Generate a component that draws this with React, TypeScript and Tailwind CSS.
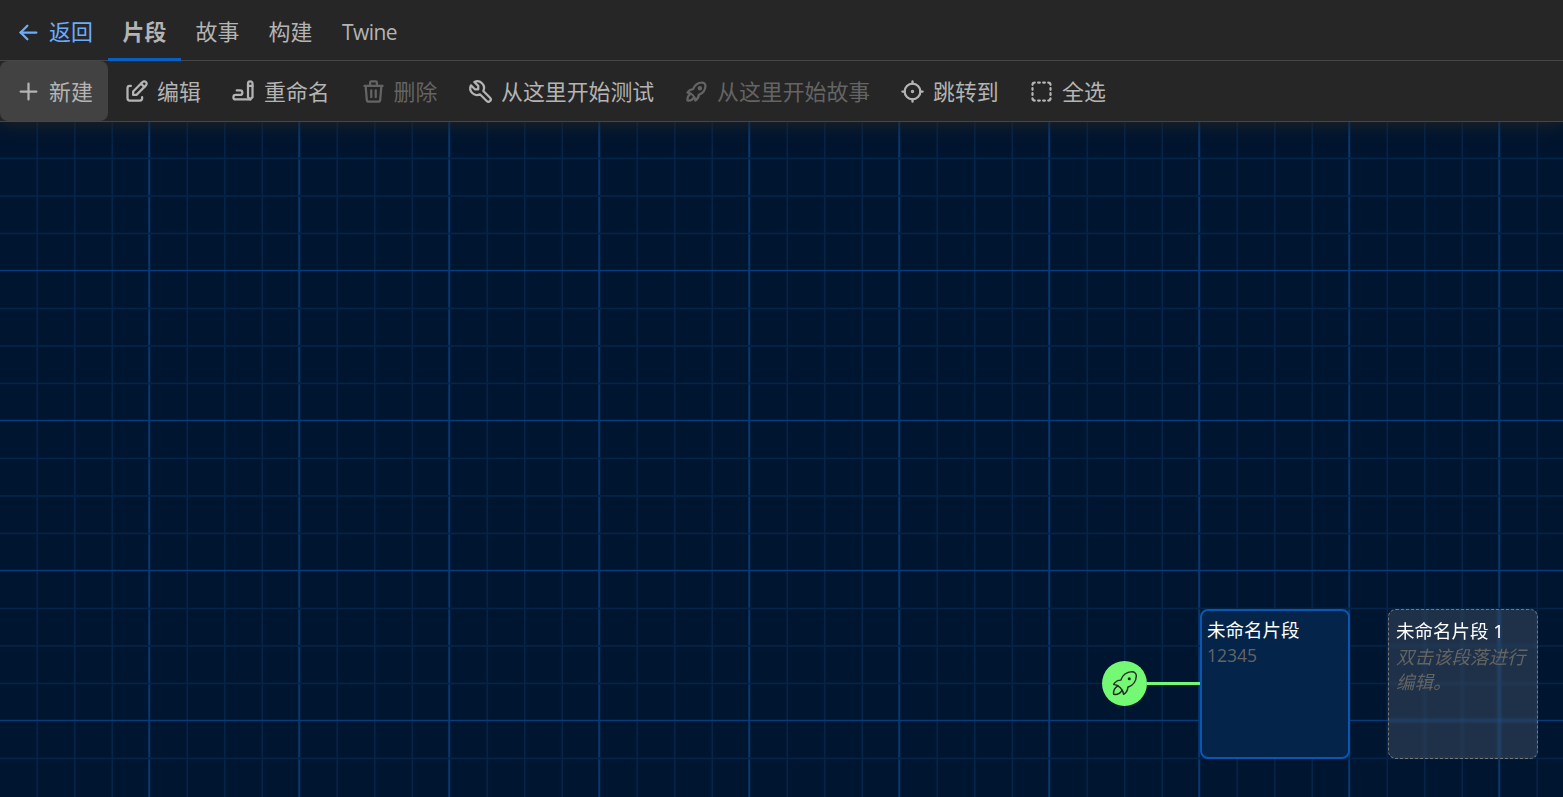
import type { ReactNode } from "react";
import { TbArrowLeft, TbEdit, TbFocus2, TbMarquee, TbPlus, TbRocket, TbTool, TbTrash, TbWriting } from "react-icons/tb";

type Action = { label: string; icon: ReactNode; width: string; disabled?: boolean; active?: boolean };

const iconClass = "size-[27px] shrink-0 [stroke-width:2]";

const actions: Action[] = [
  { label: "新建", icon: <TbPlus className={iconClass} />, width: "w-[108px]", active: true },
  { label: "编辑", icon: <TbEdit className={iconClass} />, width: "w-[107px]" },
  { label: "重命名", icon: <TbWriting className={iconClass} />, width: "w-[129.5px]" },
  { label: "删除", icon: <TbTrash className={iconClass} />, width: "w-[107.5px]", disabled: true },
  { label: "从这里开始测试", icon: <TbTool className={iconClass} />, width: "w-[216px]" },
  { label: "从这里开始故事", icon: <TbRocket className={iconClass} />, width: "w-[216px]", disabled: true },
  { label: "跳转到", icon: <TbFocus2 className={iconClass} />, width: "w-[129px]" },
  { label: "全选", icon: <TbMarquee className={iconClass} />, width: "w-[108px]" },
];

function StartRocket() {
  return (
    <svg viewBox="0 0 24 24" className="size-[34px] shrink-0" fill="none" stroke="currentColor" strokeWidth="1" strokeLinecap="round" strokeLinejoin="round">
      <path d="M4 13a8 8 0 0 1 7 7a6 6 0 0 0 3 -5a9 9 0 0 0 6 -8a3 3 0 0 0 -3 -3a9 9 0 0 0 -8 6a6 6 0 0 0 -5 3" />
      <path d="M7 14a6 6 0 0 0 -3 6a6 6 0 0 0 6 -3" />
      <circle cx="15" cy="9" r="0.6" fill="currentColor" />
    </svg>
  );
}

function Grid() {
  return (
    <svg className="absolute inset-0 size-full" aria-hidden="true">
      {Array.from({ length: 41 }, (_, i) => i + 1).map((i) => (
        <rect key={"v" + i} x={i * 37.5 - (i % 4 === 0 ? 1.75 : 1.1)} y={0} width={i % 4 === 0 ? 2 : 1.75} height={675} fill={i % 4 === 0 ? "#073973" : "#042448"} />
      ))}
      {Array.from({ length: 18 }, (_, i) => (
        <rect key={"h" + i} x={0} y={i * 37.5 - (i % 4 === 0 ? 2.25 : 1.9)} width={1563} height={i % 4 === 0 ? 1.5 : 1.75} fill={i % 4 === 0 ? "#073b7c" : "#042448"} />
      ))}
    </svg>
  );
}

export default function App() {
  return (
    <div className="flex h-[797px] w-[1563px] flex-col overflow-hidden bg-[#00152f] font-['Noto_Sans','Noto_Sans_CJK_SC',sans-serif] text-[21.9px] leading-[30px] text-[#b4b4b4]">
      <header className="relative z-10 h-[122px] shrink-0 bg-[#262626] shadow-[0_2px_18px_rgba(38,38,38,0.9)]">
        <nav className="flex h-[61px] border-b border-[#464646] pt-[3px]">
          <button className="flex h-[58px] w-[108px] items-center gap-[7px] pl-[15px] text-[#6bacff]">
            <TbArrowLeft className={iconClass} />返回
          </button>
          <button className="h-[58px] w-[73px] border-b-[3px] border-[#0860c5] pt-0.5 font-bold">片段</button>
          <button className="h-[58px] w-[73px]">故事</button>
          <button className="h-[58px] w-[73px]">构建</button>
          <button className="h-[58px] w-[85px] font-['Open_Sans',sans-serif] text-[21px] tracking-[-0.6px]">Twine</button>
        </nav>
        <div className="flex h-[61px] border-b border-[#464646]">
          {actions.map((a) => (
            <button
              key={a.label}
              className={`flex h-[60px] ${a.width} shrink-0 items-center gap-[7px] whitespace-nowrap rounded-lg pl-[15px] ${a.active ? "bg-[#424242]" : ""} ${a.disabled ? "text-[#646464]" : ""}`}
            >
              {a.icon}
              <span className="pt-0.5">{a.label}</span>
            </button>
          ))}
        </div>
      </header>
      <main className="relative flex-1">
        <Grid />
        <div className="absolute left-[1102.4px] top-[538.5px] flex w-[97.5px] items-center">
          <div className="flex size-[45px] items-center justify-center rounded-full bg-[#73f973] text-[#262626]">
            <StartRocket />
          </div>
          <div className="h-[3px] flex-1 bg-[#73f973]" />
        </div>
        <article className="absolute left-[1199.5px] top-[487px] size-[150px] rounded-lg border-2 border-[#0857b3] bg-[#042449] px-[5.5px] pt-[6px] text-[18.5px] leading-[25px]">
          <h2 className="text-white">未命名片段</h2>
          <p className="pt-px font-['Open_Sans',sans-serif] text-[17.5px] text-[#646464]">12345</p>
        </article>
        <article className="absolute left-[1388px] top-[487px] size-[150px] rounded-lg border border-dashed border-[#777] bg-white/[0.12] px-[7px] pt-[8px] text-[18.5px] leading-[25px] backdrop-blur-[1.5px]">
          <h2 className="text-white">未命名片段 1</h2>
          <p className="pt-px italic text-[#646464]">双击该段落进行编辑。</p>
        </article>
      </main>
    </div>
  );
}
